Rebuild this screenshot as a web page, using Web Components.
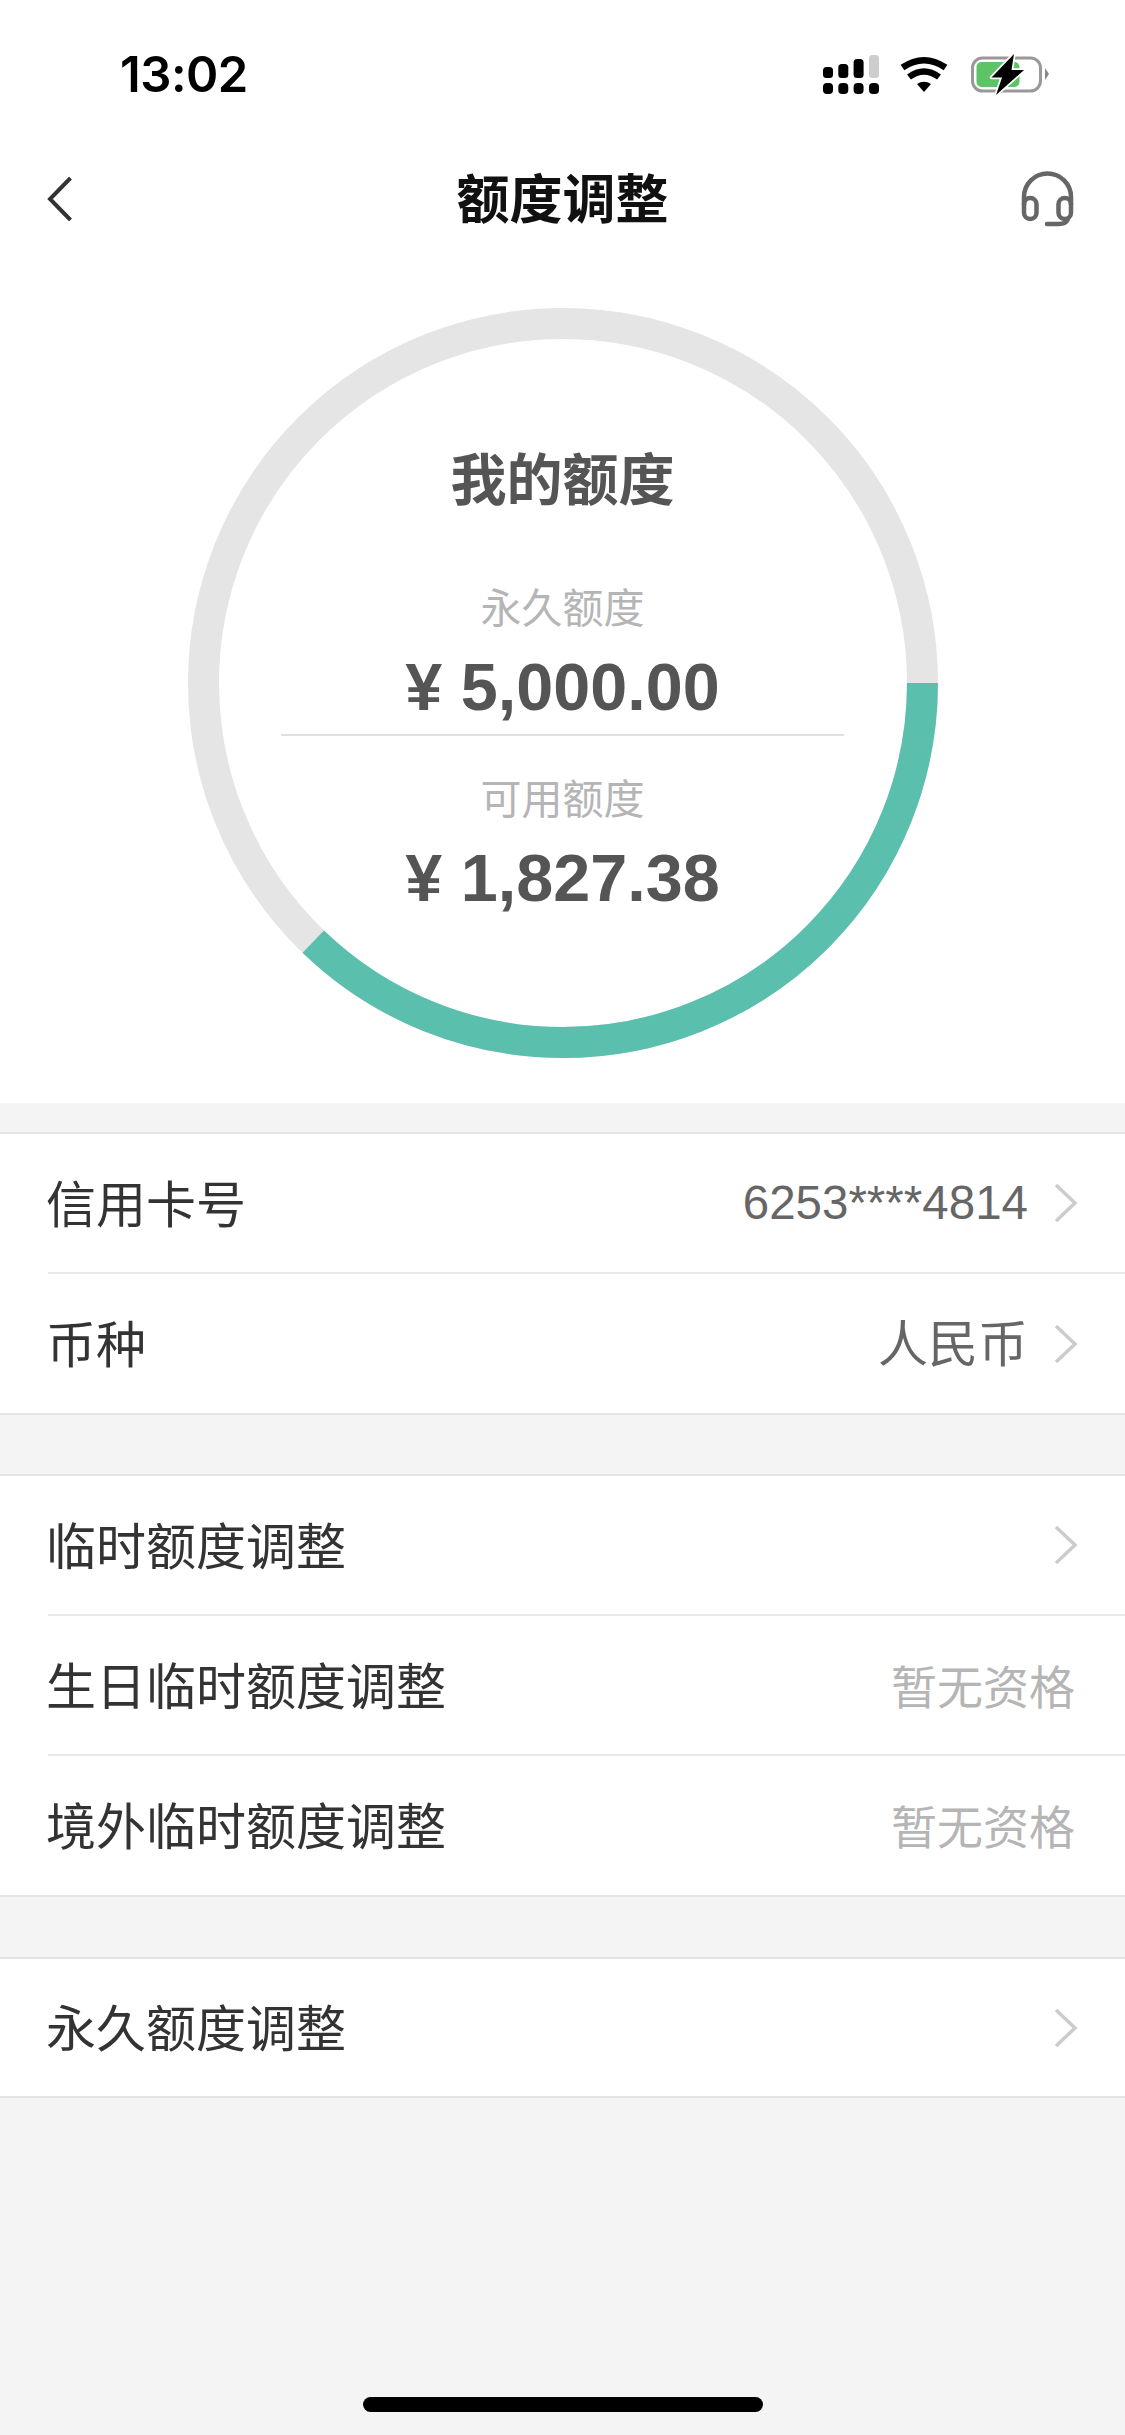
<!DOCTYPE html>
<html lang="zh">
<head>
<meta charset="utf-8">
<title>额度调整</title>
<style>
  html, body { margin: 0; padding: 0; background: #f4f4f4; }
  body { font-family: "Liberation Sans", "Noto Sans CJK SC", sans-serif; }
</style>
</head>
<body>
<credit-page>
  <status-bar time="13:02"></status-bar>
  <nav-bar>额度调整</nav-bar>
  <quota-ring percent="134">
    <span slot="title">我的额度</span>
    <quota-stat slot="limit" label="永久额度" amount="¥ 5,000.00"></quota-stat>
    <quota-stat slot="available" label="可用额度" amount="¥ 1,827.38"></quota-stat>
  </quota-ring>
  <list-group>
    <list-row chevron numeric>信用卡号<span slot="value">6253****4814</span></list-row>
    <list-row chevron>币种<span slot="value">人民币</span></list-row>
  </list-group>
  <list-group>
    <list-row chevron>临时额度调整</list-row>
    <list-row muted>生日临时额度调整<span slot="value">暂无资格</span></list-row>
    <list-row muted>境外临时额度调整<span slot="value">暂无资格</span></list-row>
  </list-group>
  <list-group style="--last-row: 137px">
    <list-row chevron>永久额度调整</list-row>
  </list-group>
  <home-bar slot="footer"></home-bar>
</credit-page>

<script>
class CreditPage extends HTMLElement {
  constructor() {
    super();
    this.attachShadow({mode: "open"});
    this.shadowRoot.innerHTML = `
    <style>
      :host {
        display: flex;
        flex-direction: column;
        height: 2435px;
        overflow: hidden;
        background: #f4f4f4;
      }
      .footer { margin-top: auto; }
    </style>
    <slot></slot>
    <div class="footer"><slot name="footer"></slot></div>
    `;
  }
}

class StatusBar extends HTMLElement {
  constructor() {
    super();
    this.attachShadow({mode: "open"});
  }
  connectedCallback() {
    this.shadowRoot.innerHTML = `
    <style>
      :host {
        display: flex;
        align-items: flex-start;
        height: 132px;
        box-sizing: border-box;
        padding: 55px 76px 0 120px;
        background: #fff;
      }
      .time {
        font: 600 49px/40px Inter, "Liberation Sans", sans-serif;
        color: #000;
        letter-spacing: -0.5px;
      }
      .icons { display: flex; align-items: flex-start; margin-left: auto; }
      .wifi { margin: 2px 23px 0 21px; }
      svg { display: block; overflow: visible; }
    </style>
    <div class="time">${this.getAttribute("time")}</div>
    <div class="icons">
      <!-- signal -->
      <svg width="56" height="39" viewBox="0 0 56 39">
        <rect x="0" y="28" width="10" height="11" rx="4"/>
        <rect x="15.300" y="28" width="10" height="11" rx="4"/>
        <rect x="30.600" y="28" width="10" height="11" rx="4"/>
        <rect x="46" y="28" width="10" height="11" rx="4"/>
        <rect x="0" y="12" width="10" height="11" rx="3.500"/>
        <rect x="15.300" y="9" width="10" height="14" rx="3.500"/>
        <rect x="30.600" y="4" width="10" height="19" rx="3.500"/>
        <rect x="46" y="0" width="10" height="23" rx="3.500" fill="#cdcdcd"/>
      </svg>
      <!-- wifi -->
      <svg class="wifi" width="48" height="35" viewBox="0 0 48 35" fill="none" stroke="#000">
        <path d="M2.500 10.500Q24 -4 45.500 10.500" stroke-width="6.500"/>
        <path d="M9 20Q24 9 39 20" stroke-width="6.500"/>
        <path d="M24 35L17 27Q24 22.500 31 27Z" fill="#000" stroke="none"/>
      </svg>
      <!-- battery -->
      <svg width="78" height="39" viewBox="0 0 78 39">
        <rect x="1.500" y="3" width="68" height="33" rx="10" fill="none" stroke="#999" stroke-width="3"/>
        <rect x="5.500" y="7" width="43" height="25" rx="5" fill="#5cc464"/>
        <path d="M74 13L78 19L74 25Z" fill="#888"/>
        <path d="M43 -1L20.500 22.500H31L25 40L53 15H40.500Z" fill="#000" stroke="#fff" stroke-width="3.500" paint-order="stroke" stroke-linejoin="round"/>
      </svg>
    </div>
    `;
  }
}

class NavBar extends HTMLElement {
  constructor() {
    super();
    this.attachShadow({mode: "open"});
    this.shadowRoot.innerHTML = `
    <style>
      :host {
        display: grid;
        grid-template-columns: 1fr auto 1fr;
        align-items: center;
        height: 134px;
        padding: 0 47px;
        background: #fff;
      }
      .title {
        font: 700 53px/60px "Noto Sans CJK SC", sans-serif;
        color: #111;
        padding-bottom: 7px;
      }
      .help { justify-self: end; margin-right: 4px; }
      svg { display: block; }
    </style>
    <!-- back -->
    <svg width="25" height="44" viewBox="0 0 25 44" fill="none" stroke="#333" stroke-width="4">
      <path d="M23.500 1L3 22L23.500 43"/>
    </svg>
    <div class="title"><slot></slot></div>
    <!-- headset -->
    <svg class="help" width="53" height="56" viewBox="0 0 53 56" fill="none" stroke="#666" stroke-width="4.500">
      <path d="M3 34V26A23.500 23.500 0 0 1 50 26V34"/>
      <rect x="3" y="27" width="12.500" height="21" rx="6.250"/>
      <rect x="37.500" y="27" width="12.500" height="21" rx="6.250"/>
      <path d="M47 48Q45 53 38 53H26" stroke-linecap="round"/>
    </svg>
    `;
  }
}

class QuotaRing extends HTMLElement {
  constructor() {
    super();
    this.attachShadow({mode: "open"});
  }
  connectedCallback() {
    const angle = Number(this.getAttribute("percent"));
    this.shadowRoot.innerHTML = `
    <style>
      :host {
        display: flex;
        justify-content: center;
        padding: 42px 0 45px;
        background: #fff;
      }
      .stack { display: grid; width: 750px; height: 750px; }
      .stack > * { grid-area: 1 / 1; }
      svg { display: block; }
      .body {
        display: flex;
        flex-direction: column;
        align-items: center;
        padding-top: 138px;
        box-sizing: border-box;
      }
      .title {
        font: 700 56px/60px "Noto Sans CJK SC", sans-serif;
        color: #555;
        margin-bottom: 74px;
      }
      .rule {
        width: 563px;
        height: 2px;
        background: #e0e0e0;
        margin: 0 0 35px;
      }
    </style>
    <div class="stack">
      <svg width="750" height="750" viewBox="0 0 750 750" fill="none" stroke-width="31">
        <circle cx="375" cy="375" r="359.500" stroke="#e5e5e5"/>
        <circle cx="375" cy="375" r="359.500" stroke="#5abfac" pathLength="360" stroke-dasharray="${angle} ${360 - angle}"/>
      </svg>
      <div class="body">
        <div class="title"><slot name="title"></slot></div>
        <slot name="limit"></slot>
        <div class="rule"></div>
        <slot name="available"></slot>
      </div>
    </div>
    `;
  }
}

class QuotaStat extends HTMLElement {
  constructor() {
    super();
    this.attachShadow({mode: "open"});
  }
  connectedCallback() {
    this.shadowRoot.innerHTML = `
    <style>
      :host {
        display: flex;
        flex-direction: column;
        align-items: center;
      }
      .label {
        font: 400 41px/50px "Noto Sans CJK SC", sans-serif;
        color: #b5b5b5;
      }
      .amount {
        font: 700 66.500px/76px "Liberation Sans", sans-serif;
        color: #555;
        margin-top: 19px;
        margin-bottom: 9px;
      }
    </style>
    <div class="label">${this.getAttribute("label")}</div>
    <div class="amount">${this.getAttribute("amount")}</div>
    `;
  }
}

class ListGroup extends HTMLElement {
  constructor() {
    super();
    this.attachShadow({mode: "open"});
    this.shadowRoot.innerHTML = `
    <style>
      :host {
        display: block;
        margin-top: 59px;
        background: #fff;
        border-top: 2px solid #e4e4e4;
        border-bottom: 2px solid #e4e4e4;
      }
      :host(:first-of-type) { margin-top: 29px; }
      :host(:last-of-type) { margin-top: 60px; }
    </style>
    <slot></slot>
    `;
  }
}

class ListRow extends HTMLElement {
  constructor() {
    super();
    this.attachShadow({mode: "open"});
  }
  connectedCallback() {
    const arrow = this.hasAttribute("chevron") ? `
      <svg width="24" height="38" viewBox="0 0 24 38" fill="none" stroke="#ccc" stroke-width="3.500">
        <path d="M2 1L21 19L2 37"/>
      </svg>` : "";
    this.shadowRoot.innerHTML = `
    <style>
      :host { display: block; padding-left: 48px; }
      :host(:not(:last-child)) .row { border-bottom: 2px solid #e9e9e9; }
      :host(:last-child) .row { height: var(--last-row, 139px); }
      .row {
        display: flex;
        align-items: center;
        box-sizing: border-box;
        height: 140px;
        padding-right: 47px;
        font: 400 50px/60px "Liberation Sans", "Noto Sans CJK SC", sans-serif;
        color: #333;
      }
      .label { margin-left: -2px; padding-top: 5px; }
      .value {
        margin-left: auto;
        padding-top: 2px;
        color: #666;
      }
      :host([numeric]) .value { font-size: 47.500px; padding-top: 0; }
      :host([muted]) .value { color: #b5b5b5; font-size: 46px; margin-right: 3px; padding-top: 5px; }
      :host([chevron]) .value { margin-right: 26px; }
      svg { display: block; margin-left: auto; }
      .value + svg { margin-left: 0; }
    </style>
    <div class="row">
      <span class="label"><slot></slot></span>
      <span class="value"><slot name="value"></slot></span>
      ${arrow}
    </div>
    `;
    if (!this.querySelector("[slot=value]")) {
      this.shadowRoot.querySelector(".value").remove();
    }
  }
}

class HomeBar extends HTMLElement {
  constructor() {
    super();
    this.attachShadow({mode: "open"});
    this.shadowRoot.innerHTML = `
    <style>
      :host {
        display: flex;
        justify-content: center;
        padding-bottom: 23px;
      }
      .bar { width: 400px; height: 15px; border-radius: 8px; background: #000; }
    </style>
    <div class="bar"></div>
    `;
  }
}

customElements.define("credit-page", CreditPage);
customElements.define("status-bar", StatusBar);
customElements.define("nav-bar", NavBar);
customElements.define("quota-ring", QuotaRing);
customElements.define("quota-stat", QuotaStat);
customElements.define("list-group", ListGroup);
customElements.define("list-row", ListRow);
customElements.define("home-bar", HomeBar);
</script>
</body>
</html>
